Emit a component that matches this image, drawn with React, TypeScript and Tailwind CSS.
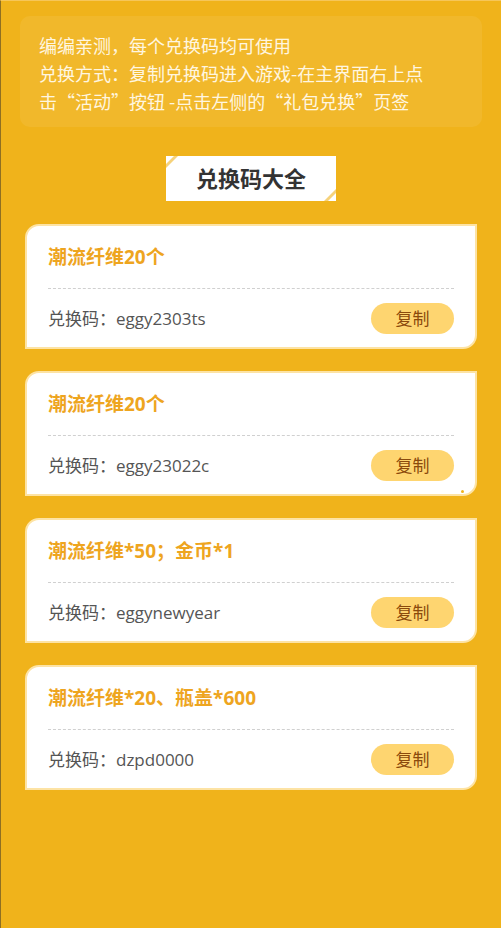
import React from "react";

type Gift = { title: string; code: string };

const gifts: Gift[] = [
  { title: "潮流纤维20个", code: "eggy2303ts" },
  { title: "潮流纤维20个", code: "eggy23022c" },
  { title: "潮流纤维*50；金币*1", code: "eggynewyear" },
  { title: "潮流纤维*20、瓶盖*600", code: "dzpd0000" },
];

const font = { fontFamily: '"Open Sans", "Noto Sans CJK SC", sans-serif' };

// full-width curly quotes, as in the reference
function Q({ children }: { children: React.ReactNode }) {
  return <span className="[font-feature-settings:'fwid']">{children}</span>;
}

function Card({ gift, dot }: { gift: Gift; dot?: boolean }) {
  return (
    <div className="relative rounded-tl-[14px] rounded-br-[14px] border-2 border-[#fde3a4] bg-white px-[21px] pt-[19px] pb-[13px]">
      <div className="text-[19px] font-bold leading-6 text-[#eea51f]">{gift.title}</div>
      <div className="mt-[19px] border-t border-dashed border-[#d0d0d0]" />
      <div className="mt-[14px] flex items-center justify-between">
        <span className="text-[17px] text-[#555]">兑换码：{gift.code}</span>
        <button
          type="button"
          className="h-[31px] w-[83px] rounded-full bg-[#fed570] text-[17px] text-[#8b4a0c]"
        >
          复制
        </button>
      </div>
      {dot ? <span className="absolute right-[11px] bottom-[1px] h-[3px] w-[3px] rounded-full bg-[#f0b41c]" /> : null}
    </div>
  );
}

export default function App() {
  return (
    <div
      className="min-h-[928px] border-t border-l border-t-[#f6c659] border-l-[#8f6f22] bg-[#f0b31b] pb-10"
      style={font}
    >
      <div
        lang="zh-CN"
        className="mx-[19px] mt-[15px] rounded-[10px] bg-white/[0.07] pt-[15px] pr-[45px] pb-3 pl-[19px] text-[18px] leading-7 text-[#fff6e0] [font-family:'Noto_Sans_CJK_SC',sans-serif] [text-spacing-trim:space-all]"
      >
        <p>编编亲测，每个兑换码均可使用</p>
        <p>
          兑换方式：复制兑换码进入游戏-在主界面右上点击<Q>“</Q>活动<Q>”</Q>按钮 -点击左侧的<Q>“</Q>礼包兑换<Q>”</Q>页签
        </p>
      </div>

      <div className="mt-[29px] flex justify-center">
        <div className="relative flex h-[45px] w-[170px] items-center justify-center bg-white">
          <svg className="absolute top-0 left-0" width="14" height="14" viewBox="0 0 14 14">
            <path d="M0 8 L8 0 L12 0 L0 12 Z" fill="#f6d27a" />
          </svg>
          <svg className="absolute right-0 bottom-0" width="14" height="14" viewBox="0 0 14 14">
            <path d="M14 6 L6 14 L2 14 L14 2 Z" fill="#f6d27a" />
          </svg>
          <span className="text-[22px] font-bold text-[#333]">兑换码大全</span>
        </div>
      </div>

      <div className="mt-[23px] flex flex-col gap-[22px] pr-[24px] pl-[24px]">
        {gifts.map((g, i) => (
          <Card key={i} gift={g} dot={i === 1} />
        ))}
      </div>
    </div>
  );
}
